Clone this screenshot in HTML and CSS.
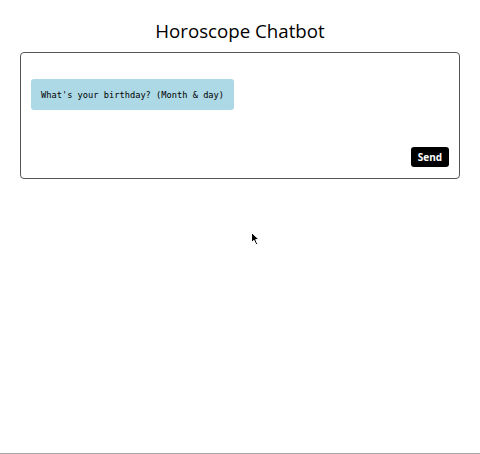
FILE: index.html
```html
<!DOCTYPE html>
<html>
<head>
<meta charset="utf-8">
<link rel="stylesheet" href="styles.css">
</head>
<body>
<div class="page">
  <h1 class="title">Horoscope Chatbot</h1>
  <div class="chat">
    <div class="messages">
      <div class="bubble">What's your birthday? (Month &amp; day)</div>
    </div>
    <div class="actions">
      <button class="send">Send</button>
    </div>
  </div>
</div>
<svg class="cursor" width="10" height="14" viewBox="0 0 10 14">
  <path d="M0.5 0.5 L0.5 10.5 L3 8.3 L5 12.8 L6.6 12 L4.7 7.6 L8 7.6 Z" fill="#000" stroke="#fff" stroke-width="1"/>
</svg>
<div class="bottom-line"></div>
</body>
</html>
```
FILE: styles.css
```css
html, body {
  margin: 0;
  padding: 0;
  background: #fff;
  height: 454px;
  overflow: hidden;
}
body {
  position: relative;
  font-family: "Open Sans", "DejaVu Sans", sans-serif;
}
.page {
  padding: 0 20px;
}
.title {
  margin: 0;
  padding-top: 22px;
  height: 52px;
  box-sizing: border-box;
  font-size: 18.7px;
  line-height: 18px;
  font-weight: 500;
  text-align: center;
  color: #000;
}
.chat {
  width: 440px;
  height: 127px;
  box-sizing: border-box;
  border: 1px solid #555;
  border-radius: 4px;
  display: flex;
  flex-direction: column;
  justify-content: space-between;
  padding: 26px 10px 11px 10px;
}
.messages {
  display: flex;
}
.bubble {
  background: #add8e6;
  border-radius: 3px;
  height: 31px;
  box-sizing: border-box;
  padding: 0 10px;
  display: flex;
  align-items: center;
  font-family: "DejaVu Sans Mono", monospace;
  font-size: 8.7px;
  color: #000;
}
.actions {
  display: flex;
  justify-content: flex-end;
}
.send {
  background: #000;
  color: #fff;
  border: none;
  border-radius: 3px;
  width: 38px;
  height: 20px;
  padding: 0;
  font-family: "Open Sans", "DejaVu Sans", sans-serif;
  font-weight: 700;
  font-size: 10px;
}
.cursor {
  position: absolute;
  left: 251px;
  top: 232px;
}
.bottom-line {
  position: absolute;
  left: 0;
  right: 0;
  bottom: 0;
  height: 1px;
  background: #a6a6a6;
}
```
